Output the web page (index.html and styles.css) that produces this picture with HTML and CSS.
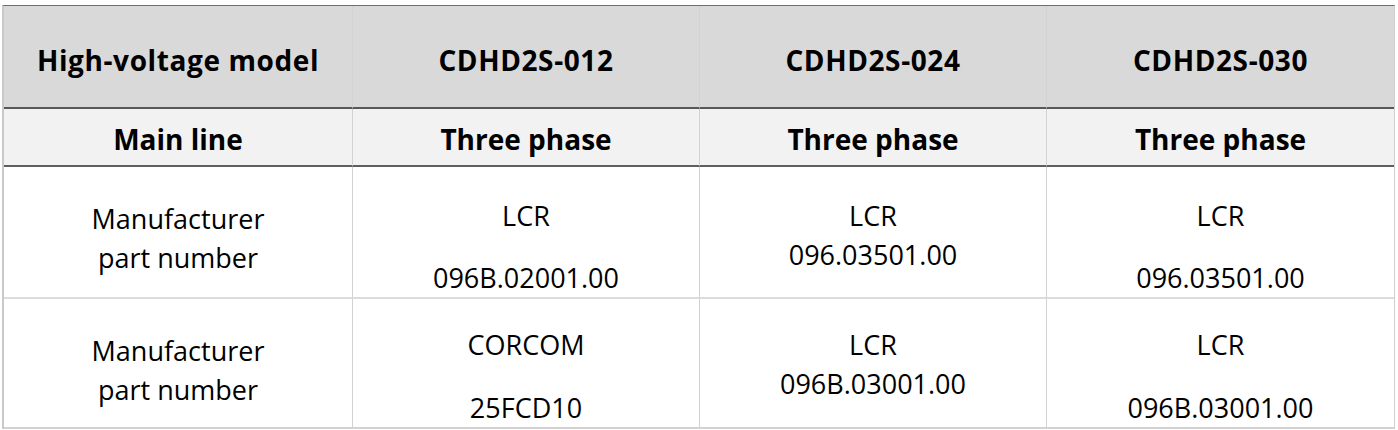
FILE: index.html
```html
<!DOCTYPE html>
<html lang="en">
<head>
<meta charset="utf-8">
<title>High-voltage models</title>
<link rel="stylesheet" href="styles.css">
</head>
<body>
<table class="spec">
  <colgroup>
    <col class="c1"><col class="c2"><col class="c3"><col class="c4">
  </colgroup>
  <thead>
    <tr class="row-model">
      <th>High-voltage model</th>
      <th>CDHD2S-012</th>
      <th>CDHD2S-024</th>
      <th>CDHD2S-030</th>
    </tr>
    <tr class="row-line">
      <th>Main line</th>
      <th>Three phase</th>
      <th>Three phase</th>
      <th>Three phase</th>
    </tr>
  </thead>
  <tbody>
    <tr class="row-part first">
      <td class="label">Manufacturer<br>part number</td>
      <td><p>LCR</p><p class="gap">096B.02001.00</p></td>
      <td><p>LCR</p><p>096.03501.00</p></td>
      <td><p>LCR</p><p class="gap">096.03501.00</p></td>
    </tr>
    <tr class="row-part last">
      <td class="label">Manufacturer<br>part number</td>
      <td><p>CORCOM</p><p class="gap">25FCD10</p></td>
      <td><p>LCR</p><p>096B.03001.00</p></td>
      <td><p>LCR</p><p class="gap">096B.03001.00</p></td>
    </tr>
  </tbody>
</table>
</body>
</html>
```

FILE: styles.css
```css
html, body {
  margin: 0;
  padding: 0;
  background: #ffffff;
}

body {
  padding: 5px 0 0 2px;
  font-family: "Open Sans", "Noto Sans", sans-serif;
  color: #000000;
}

.spec {
  border-collapse: separate;
  border-spacing: 0;
  table-layout: fixed;
  width: 1393px;
  border-top: 1px solid #6e6e6e;
  border-left: 2px solid #c9c9c9;
  border-right: 1px solid #cfcfcf;
  font-size: 27px;
  line-height: 39px;
}

.c1 { width: 349px; }
.c2 { width: 347px; }
.c3 { width: 347px; }
.c4 { width: 347px; }

.spec th,
.spec td {
  padding: 0 4px;
  text-align: center;
  vertical-align: top;
  border-right: 1px solid #d2d2d2;
}

.spec th:last-child,
.spec td:last-child {
  border-right: none;
}

.spec th {
  font-weight: 700;
  font-size: 28px;
}

.row-model th {
  background: #d9d9d9;
  height: 103px;
  box-sizing: border-box;
  padding-top: 35px;
  letter-spacing: 0.6px;
  border-bottom: 2px solid #585858;
}

.row-line th {
  background: #f2f2f2;
  height: 58px;
  box-sizing: border-box;
  padding-top: 11px;
  border-bottom: 2px solid #5e5e5e;
}

.row-part td {
  font-weight: 400;
  height: 128px;
  box-sizing: border-box;
  border-bottom: 2px solid #dcdcdc;
  padding-top: 29px;
}

.row-part.last td {
  border-bottom-color: #d2d2d2;
  padding-top: 26px;
}

.row-part td.label {
  padding-top: 32px;
}

.spec p {
  margin: 0;
}

.row-part.first p.gap {
  margin-top: 23px;
}

.row-part.last p.gap {
  margin-top: 24px;
}
```
